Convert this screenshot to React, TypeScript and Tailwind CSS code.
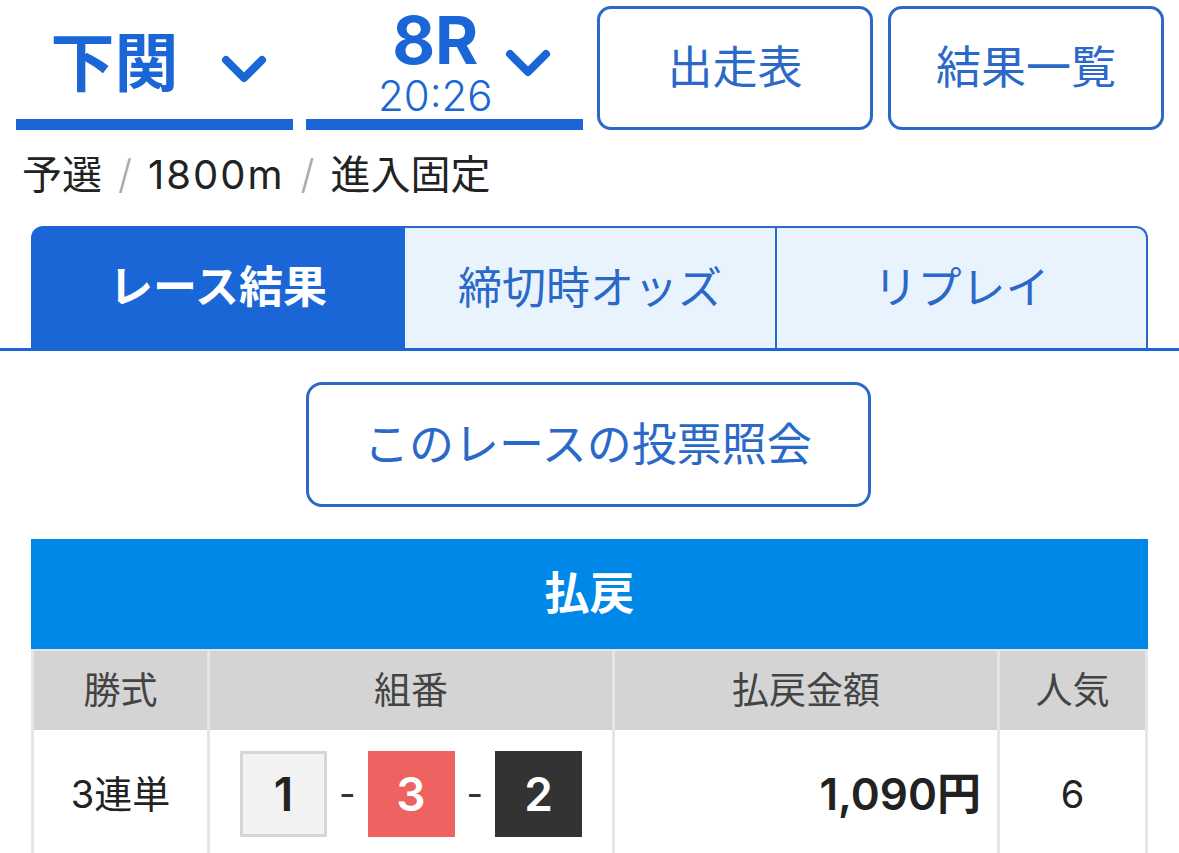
const font = { fontFamily: 'Inter, "Noto Sans CJK JP", sans-serif' };

function Chevron() {
  return (
    <svg width="46" height="30" viewBox="0 0 46 30" className="shrink-0">
      <polyline points="5,5 23,23 41,5" fill="none" stroke="#1a66d6" strokeWidth="8" strokeLinecap="round" strokeLinejoin="round" />
    </svg>
  );
}

function NumBox({ n, cls }: { n: string; cls: string }) {
  return (
    <div className={`w-[87px] h-[86px] flex items-center justify-center text-[46px] font-semibold ${cls}`}>{n}</div>
  );
}

export default function App() {
  return (
    <div className="w-[1179px] h-[853px] overflow-hidden bg-white text-[#222]" style={font}>
      {/* header selectors + buttons */}
      <div className="flex gap-[14px] pl-[16px] pt-[6px]">
        <div className="w-[277px] h-[124px] flex items-center justify-center gap-[42px] border-b-[11px] border-[#1a66d6] pl-[8px]">
          <span className="text-[64px] font-bold text-[#1a66d6] leading-none">下関</span>
          <div className="mt-[14px]">
            <Chevron />
          </div>
        </div>
        <div className="w-[277px] h-[124px] flex items-center gap-[12px] border-b-[11px] border-[#1a66d6] pl-[72px] -ml-[1px]">
          <div className="flex flex-col items-center text-[#1a66d6] -mt-[2px]">
            <span className="text-[66px] font-bold leading-none">8R</span>
            <span className="text-[42px] font-light leading-none mt-[2px]">20:26</span>
          </div>
          <div className="mt-[2px]">
            <Chevron />
          </div>
        </div>
        <button className="w-[276px] h-[124px] rounded-[14px] border-[3px] border-[#2a69c8] text-[#2a69c8] text-[45px] flex items-center justify-center">出走表</button>
        <button className="w-[276px] h-[124px] rounded-[14px] border-[3px] border-[#2a69c8] text-[#2a69c8] text-[45px] flex items-center justify-center ml-[1px]">結果一覧</button>
      </div>

      {/* race info */}
      <div className="pl-[22px] mt-[22px] text-[40px] leading-[46px] text-[#222] flex gap-[16px]">
        <span>予選</span>
        <span className="text-[#aaa] font-light">/</span>
        <span className="tracking-[2px]">1800m</span>
        <span className="text-[#aaa] font-light">/</span>
        <span>進入固定</span>
      </div>

      {/* tabs */}
      <div className="mt-[28px] border-b-[3px] border-[#1a66d6]">
        <div className="mx-[31px] flex h-[122px]">
          <div className="w-[374px] bg-[#1a66d6] rounded-tl-[12px] flex items-center justify-center text-white text-[44px] font-bold">レース結果</div>
          <div className="w-[372px] bg-[#e9f3fd] border-t-[2px] border-r-[2px] border-[#2a69c8] flex items-center justify-center text-[#2a69c8] text-[44px]">締切時オッズ</div>
          <div className="flex-1 bg-[#e9f3fd] border-t-[2px] border-r-[2px] border-[#2a69c8] rounded-tr-[12px] flex items-center justify-center text-[#2a69c8] text-[44px]">リプレイ</div>
        </div>
      </div>

      {/* inquiry button */}
      <div className="flex justify-center mt-[31px] pr-[3px]">
        <button className="w-[565px] h-[125px] rounded-[16px] border-[3px] border-[#2a69c8] text-[#2a69c8] text-[45px] flex items-center justify-center">このレースの投票照会</button>
      </div>

      {/* payout table */}
      <div className="mx-[31px] mt-[32px]">
        <div className="h-[110px] bg-[#0088e8] flex items-center justify-center text-white text-[45px] font-bold">払戻</div>
        <div className="bg-[#e6e6e6] px-[3px] pt-[2px] grid grid-cols-[173px_402px_382px_1fr] gap-x-[3px]">
          <div className="h-[79px] bg-[#d4d4d4] flex items-center justify-center text-[37px] text-[#444]">勝式</div>
          <div className="h-[79px] bg-[#d4d4d4] flex items-center justify-center text-[37px] text-[#444]">組番</div>
          <div className="h-[79px] bg-[#d4d4d4] flex items-center justify-center text-[37px] text-[#444]">払戻金額</div>
          <div className="h-[79px] bg-[#d4d4d4] flex items-center justify-center text-[37px] text-[#444]">人気</div>

          <div className="h-[128px] bg-white flex items-center justify-center text-[38px] text-[#222]">3連単</div>
          <div className="h-[128px] bg-white flex items-center justify-center gap-[12px] text-[36px] text-[#333]">
            <NumBox n="1" cls="bg-[#f2f2f2] border-[3px] border-[#d6d6d6] text-[#222]" />
            <span>-</span>
            <NumBox n="3" cls="bg-[#ee6262] text-white" />
            <span>-</span>
            <NumBox n="2" cls="bg-[#333333] text-white" />
          </div>
          <div className="h-[128px] bg-white flex items-center justify-end pr-[16px] text-[44px] font-semibold text-[#222]">1,090円</div>
          <div className="h-[128px] bg-white flex items-center justify-center text-[38px] text-[#222]">6</div>
        </div>
      </div>
    </div>
  );
}
